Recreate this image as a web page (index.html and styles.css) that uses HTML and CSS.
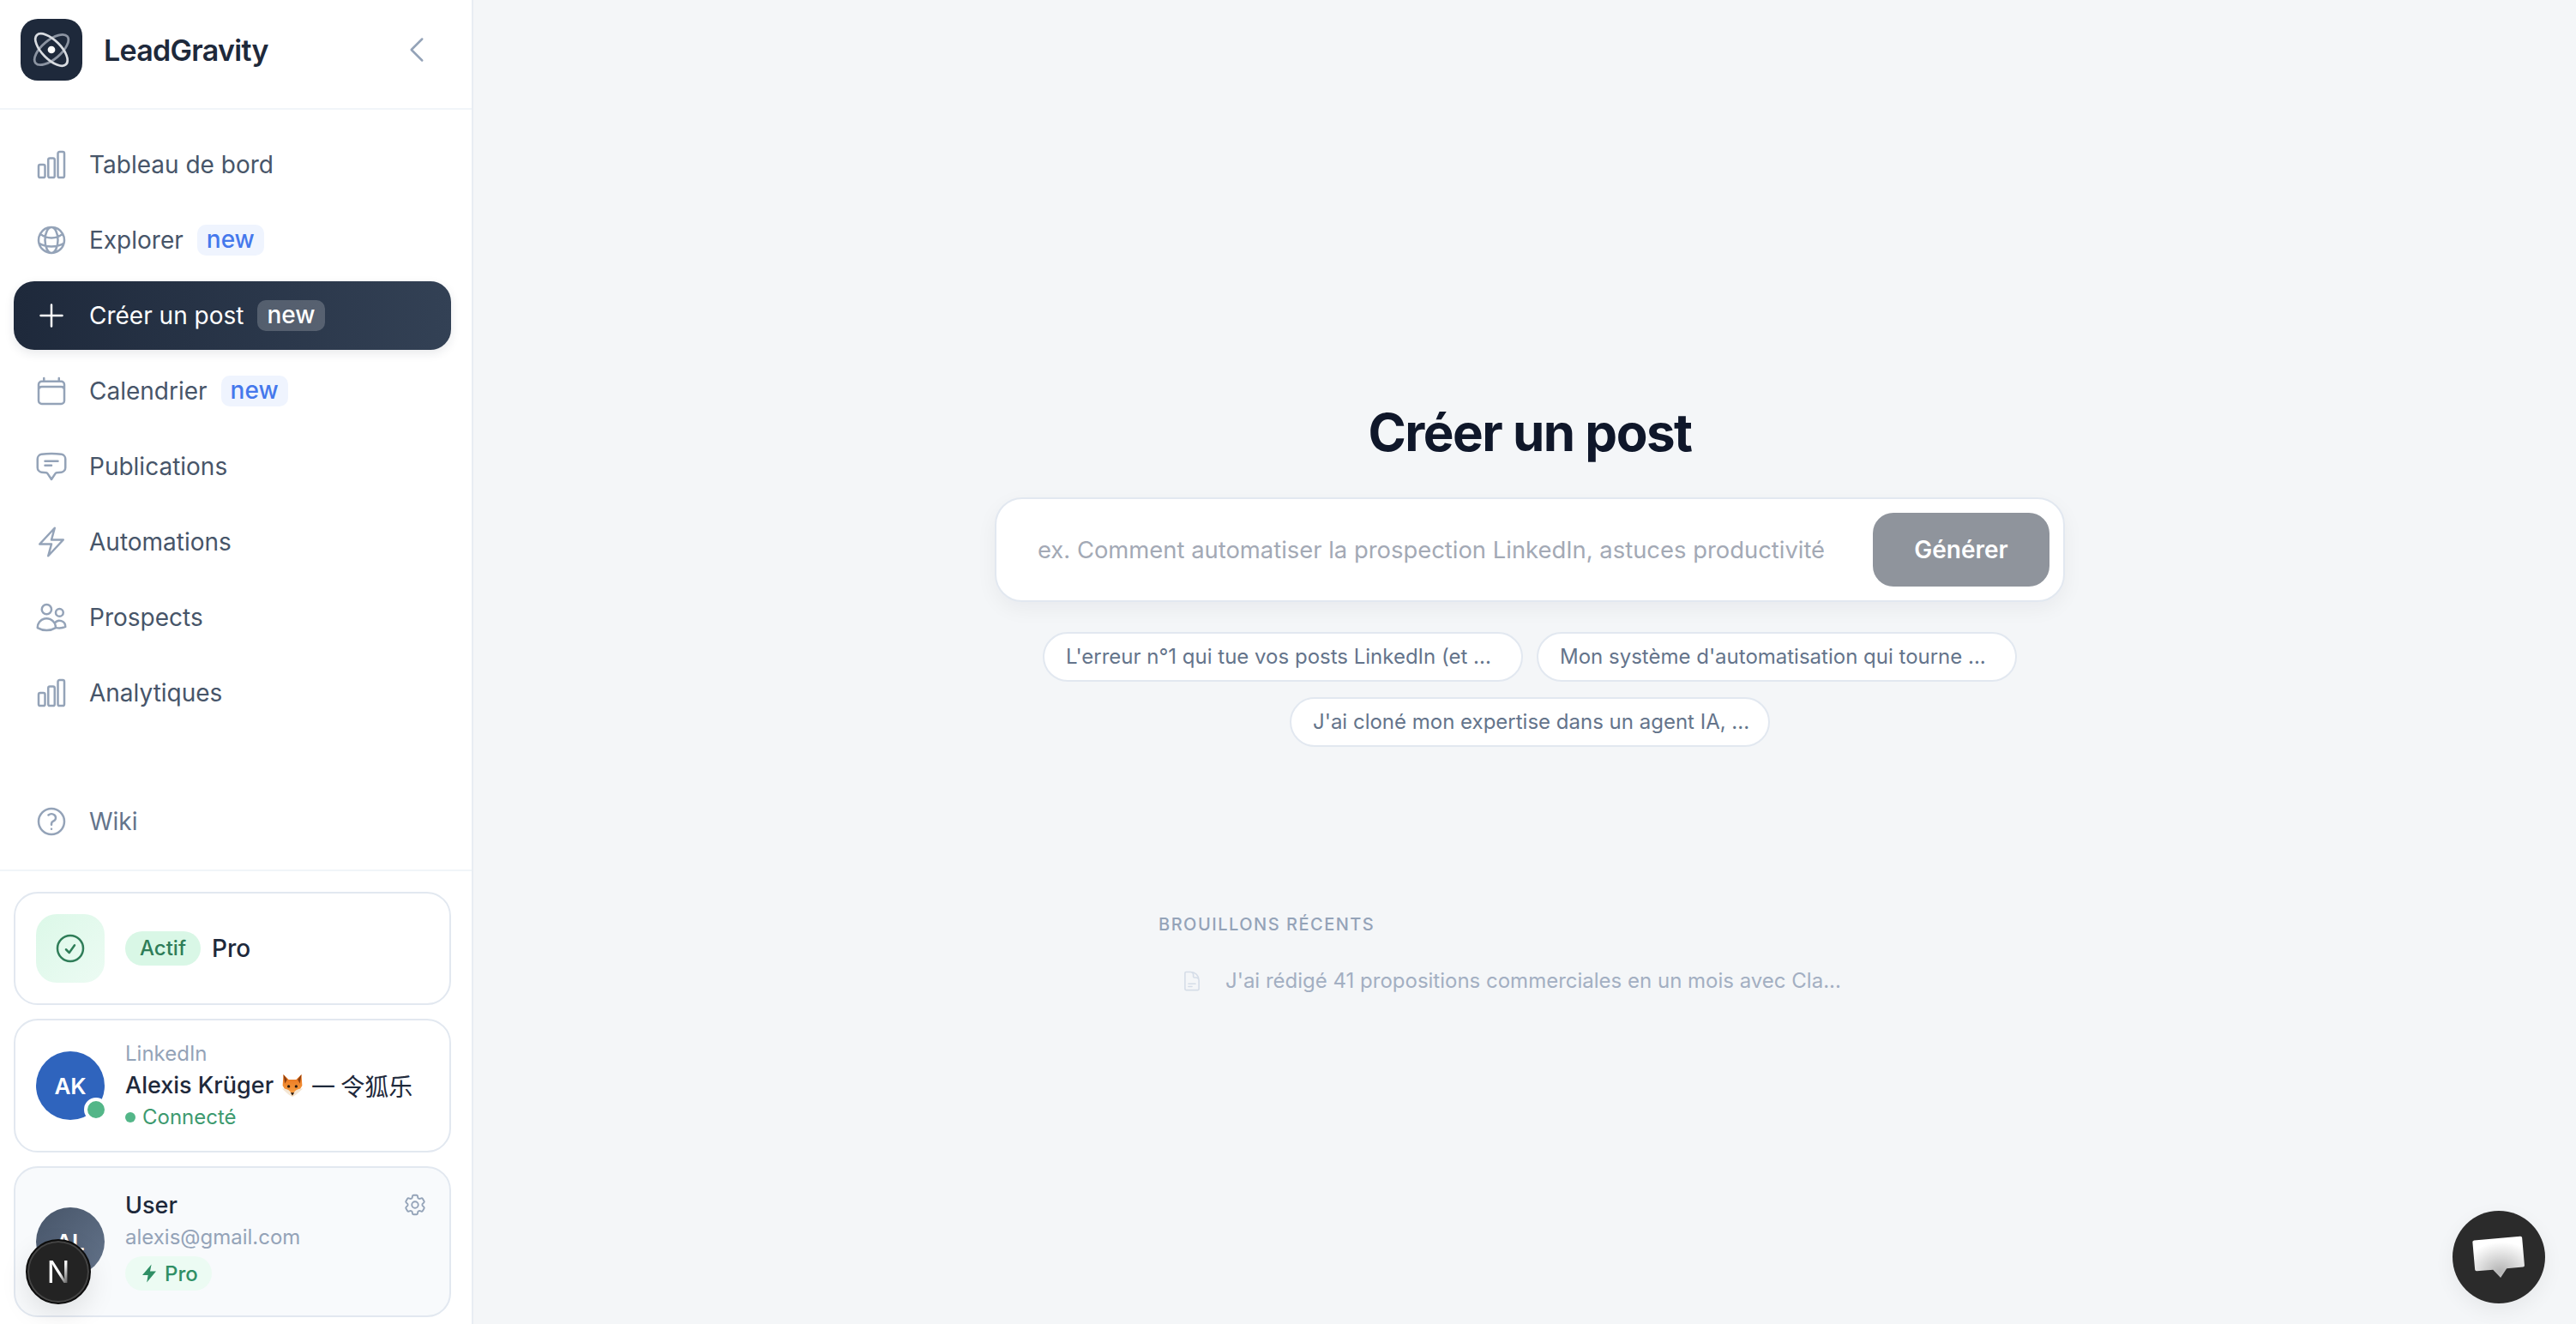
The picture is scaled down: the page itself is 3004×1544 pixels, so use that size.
FILE: index.html
```html
<!DOCTYPE html>
<html lang="fr">
<head>
    <meta charset="UTF-8">
    <meta name="viewport" content="width=device-width, initial-scale=1.0">
    <title>LeadGravity - Créer un post</title>
    <link rel="stylesheet" href="styles.css">
</head>
<body>

    <div class="app">
        <!-- Sidebar -->
        <aside class="sidebar">
            <div class="brand">
                <div class="brand-logo">
                    <svg viewBox="0 0 40 40" width="46" height="46" fill="none" stroke-width="2.4">
                        <ellipse cx="20" cy="20" rx="21" ry="9.5" transform="rotate(-40 20 20)" stroke="#8b93a1"/>
                        <ellipse cx="20" cy="20" rx="21" ry="9.5" transform="rotate(45 20 20)" stroke="#d9dce1"/>
                        <circle cx="20" cy="20" r="3.8" fill="#fff" stroke="none"/>
                    </svg>
                </div>
                <span class="brand-name">LeadGravity</span>
                <svg class="collapse" viewBox="0 0 24 24" width="40" height="40" fill="none" stroke="#94a3b8" stroke-width="1.5" stroke-linecap="round" stroke-linejoin="round"><path d="M15.75 19.5 8.25 12l7.5-7.5"/></svg>
            </div>

            <nav class="nav">
                <a class="nav-item">
                    <svg class="icon" viewBox="0 0 24 24"><path d="M3 13.125C3 12.504 3.504 12 4.125 12h2.25c.621 0 1.125.504 1.125 1.125v6.75C7.5 20.496 6.996 21 6.375 21h-2.25A1.125 1.125 0 0 1 3 19.875v-6.75ZM9.75 8.625c0-.621.504-1.125 1.125-1.125h2.25c.621 0 1.125.504 1.125 1.125v11.25c0 .621-.504 1.125-1.125 1.125h-2.25a1.125 1.125 0 0 1-1.125-1.125V8.625ZM16.5 4.125c0-.621.504-1.125 1.125-1.125h2.25C20.496 3 21 3.504 21 4.125v15.75c0 .621-.504 1.125-1.125 1.125h-2.25a1.125 1.125 0 0 1-1.125-1.125V4.125Z"/></svg>
                    <span>Tableau de bord</span>
                </a>
                <a class="nav-item">
                    <svg class="icon" viewBox="0 0 24 24"><path d="M12 21a9.004 9.004 0 0 0 8.716-6.747M12 21a9.004 9.004 0 0 1-8.716-6.747M12 21c2.485 0 4.5-4.03 4.5-9S14.485 3 12 3m0 18c-2.485 0-4.5-4.03-4.5-9S9.515 3 12 3m0 0a8.997 8.997 0 0 1 7.843 4.582M12 3a8.997 8.997 0 0 0-7.843 4.582m15.686 0A11.953 11.953 0 0 1 12 10.5c-2.998 0-5.74-1.1-7.843-2.918m15.686 0A8.959 8.959 0 0 1 21 12c0 .778-.099 1.533-.284 2.253m0 0A17.919 17.919 0 0 1 12 16.5c-3.162 0-6.133-.815-8.716-2.247m0 0A9.004 9.004 0 0 1 3 12c0-1.605.42-3.113 1.157-4.418"/></svg>
                    <span>Explorer</span>
                    <span class="badge-new">new</span>
                </a>
                <a class="nav-item active">
                    <svg class="icon" viewBox="0 0 24 24"><path d="M12 4.5v15m7.5-7.5h-15"/></svg>
                    <span>Créer un post</span>
                    <span class="badge-new">new</span>
                </a>
                <a class="nav-item">
                    <svg class="icon" viewBox="0 0 24 24"><path d="M6.75 3v2.25M17.25 3v2.25M3 18.75V7.5a2.25 2.25 0 0 1 2.25-2.25h13.5A2.25 2.25 0 0 1 21 7.5v11.25m-18 0A2.25 2.25 0 0 0 5.25 21h13.5A2.25 2.25 0 0 0 21 18.75m-18 0v-7.5A2.25 2.25 0 0 1 5.25 9h13.5A2.25 2.25 0 0 1 21 11.25v7.5"/></svg>
                    <span>Calendrier</span>
                    <span class="badge-new">new</span>
                </a>
                <a class="nav-item">
                    <svg class="icon" viewBox="0 0 24 24"><path d="M7.5 8.25h9m-9 3H12m-9.75 1.51c0 1.6 1.123 2.994 2.707 3.227 1.129.166 2.27.293 3.423.379.35.026.67.21.865.501L12 21l2.755-4.133a1.14 1.14 0 0 1 .865-.501 48.172 48.172 0 0 0 3.423-.379c1.584-.233 2.707-1.626 2.707-3.228V6.741c0-1.602-1.123-2.995-2.707-3.228A48.394 48.394 0 0 0 12 3c-2.392 0-4.744.175-7.043.513C3.373 3.746 2.25 5.14 2.25 6.741v6.018Z"/></svg>
                    <span>Publications</span>
                </a>
                <a class="nav-item">
                    <svg class="icon" viewBox="0 0 24 24"><path d="m3.75 13.5 10.5-11.25L12 10.5h8.25L9.75 21.75 12 13.5H3.75Z"/></svg>
                    <span>Automations</span>
                </a>
                <a class="nav-item">
                    <svg class="icon" viewBox="0 0 24 24"><path d="M15 19.128a9.38 9.38 0 0 0 2.625.372 9.337 9.337 0 0 0 4.121-.952 4.125 4.125 0 0 0-7.533-2.493M15 19.128v-.003c0-1.113-.285-2.16-.786-3.07M15 19.128v.106A12.318 12.318 0 0 1 8.624 21c-2.331 0-4.512-.645-6.374-1.766l-.001-.109a6.375 6.375 0 0 1 11.964-3.07M12 6.375a3.375 3.375 0 1 1-6.75 0 3.375 3.375 0 0 1 6.75 0Zm8.25 2.25a2.625 2.625 0 1 1-5.25 0 2.625 2.625 0 0 1 5.25 0Z"/></svg>
                    <span>Prospects</span>
                </a>
                <a class="nav-item">
                    <svg class="icon" viewBox="0 0 24 24"><path d="M3 13.125C3 12.504 3.504 12 4.125 12h2.25c.621 0 1.125.504 1.125 1.125v6.75C7.5 20.496 6.996 21 6.375 21h-2.25A1.125 1.125 0 0 1 3 19.875v-6.75ZM9.75 8.625c0-.621.504-1.125 1.125-1.125h2.25c.621 0 1.125.504 1.125 1.125v11.25c0 .621-.504 1.125-1.125 1.125h-2.25a1.125 1.125 0 0 1-1.125-1.125V8.625ZM16.5 4.125c0-.621.504-1.125 1.125-1.125h2.25C20.496 3 21 3.504 21 4.125v15.75c0 .621-.504 1.125-1.125 1.125h-2.25a1.125 1.125 0 0 1-1.125-1.125V4.125Z"/></svg>
                    <span>Analytiques</span>
                </a>
                <a class="nav-item wiki">
                    <svg class="icon" viewBox="0 0 24 24"><path d="M9.879 7.519c1.171-1.025 3.071-1.025 4.242 0 1.172 1.025 1.172 2.687 0 3.712-.203.179-.43.326-.67.442-.745.361-1.45.999-1.45 1.827v.75M21 12a9 9 0 1 1-18 0 9 9 0 0 1 18 0Zm-9 5.25h.008v.008H12v-.008Z"/></svg>
                    <span>Wiki</span>
                </a>
            </nav>

            <div class="side-footer">
                <!-- Plan -->
                <div class="card plan-card">
                    <div class="plan-tile">
                        <svg viewBox="0 0 24 24" width="40" height="40" fill="none" stroke="#2f7d58" stroke-width="1.5" stroke-linecap="round" stroke-linejoin="round"><path d="M9 12.75 11.25 15 15 9.75M21 12a9 9 0 1 1-18 0 9 9 0 0 1 18 0Z"/></svg>
                    </div>
                    <span class="pill-actif">Actif</span>
                    <span class="plan-name">Pro</span>
                </div>

                <!-- LinkedIn account -->
                <div class="card account-card">
                    <div class="avatar avatar-blue">AK<span class="online"></span></div>
                    <div class="card-text">
                        <div class="muted-line">LinkedIn</div>
                        <div class="name-line">Alexis Krüger
                            <svg class="fox" viewBox="0 0 32 32" width="28" height="28">
                                <defs>
                                    <linearGradient id="fur" x1="0" y1="0" x2="0" y2="1">
                                        <stop offset="0%" stop-color="#e8701a"/>
                                        <stop offset="100%" stop-color="#f9a548"/>
                                    </linearGradient>
                                </defs>
                                <path d="M4 1l7 7h10l7-7 1 15-3 5-10 9-10-9-3-5z" fill="url(#fur)"/>
                                <path d="M4 1l5 7-3 5zM28 1l-5 7 3 5z" fill="#8a3f12"/>
                                <path d="M2 20c5 0 9 1 12 5l2 5 2-5c3-4 7-5 12-5l-9 8-5 3-5-3z" fill="#f4e6d4"/>
                                <circle cx="11" cy="17" r="1.9" fill="#2b1a10"/>
                                <circle cx="21" cy="17" r="1.9" fill="#2b1a10"/>
                                <path d="M13.5 25.5h5l-2.5 3.5z" fill="#2b1a10"/>
                            </svg>
                            <span class="cjk">一 令狐乐</span>
                        </div>
                        <div class="status-line"><span class="status-dot"></span>Connecté</div>
                    </div>
                </div>

                <!-- User -->
                <div class="card user-card">
                    <div class="avatar avatar-slate">AL</div>
                    <div class="card-text">
                        <div class="name-line">User</div>
                        <div class="muted-line">alexis@gmail.com</div>
                        <span class="pill-pro">
                            <svg viewBox="0 0 24 24" width="24" height="24" fill="#2f8f65"><path d="M14.6 1.5 4 14h6.6l-1.4 8.5L20 9.6h-7z"/></svg>
                            Pro
                        </span>
                    </div>
                    <svg class="settings" viewBox="0 0 24 24" width="30" height="30" fill="none" stroke="#94a3b8" stroke-width="1.5" stroke-linecap="round" stroke-linejoin="round"><path d="M9.594 3.94c.09-.542.56-.94 1.11-.94h2.593c.55 0 1.02.398 1.11.94l.213 1.281c.063.374.313.686.645.87.074.04.147.083.22.127.325.196.72.257 1.075.124l1.217-.456a1.125 1.125 0 0 1 1.37.49l1.296 2.247a1.125 1.125 0 0 1-.26 1.431l-1.003.827c-.293.241-.438.613-.43.992a7.723 7.723 0 0 1 0 .255c-.008.378.137.75.43.991l1.004.827c.424.35.534.955.26 1.43l-1.298 2.247a1.125 1.125 0 0 1-1.369.491l-1.217-.456c-.355-.133-.75-.072-1.076.124a6.47 6.47 0 0 1-.22.128c-.331.183-.581.495-.644.869l-.213 1.281c-.09.543-.56.94-1.11.94h-2.594c-.55 0-1.019-.398-1.11-.94l-.213-1.281c-.062-.374-.312-.686-.644-.87a6.52 6.52 0 0 1-.22-.127c-.325-.196-.72-.257-1.076-.124l-1.217.456a1.125 1.125 0 0 1-1.369-.49l-1.297-2.247a1.125 1.125 0 0 1 .26-1.431l1.004-.827c.292-.24.437-.613.43-.991a6.932 6.932 0 0 1 0-.255c.007-.38-.138-.751-.43-.992l-1.004-.827a1.125 1.125 0 0 1-.26-1.43l1.297-2.247a1.125 1.125 0 0 1 1.37-.491l1.216.456c.356.133.751.072 1.076-.124.072-.044.146-.086.22-.128.332-.183.582-.495.644-.869l.214-1.28Z"/><path d="M15 12a3 3 0 1 1-6 0 3 3 0 0 1 6 0Z"/></svg>
                </div>
            </div>
        </aside>

        <!-- Main content -->
        <main class="main">
            <h1 class="title">Créer un post</h1>

            <div class="prompt">
                <input class="prompt-input" type="text" placeholder="ex. Comment automatiser la prospection LinkedIn, astuces productivité">
                <button class="prompt-btn">Générer</button>
            </div>

            <div class="chips">
                <span class="chip">L'erreur n°1 qui tue vos posts LinkedIn (et ...</span>
                <span class="chip">Mon système d'automatisation qui tourne ...</span>
                <span class="chip">J'ai cloné mon expertise dans un agent IA, ...</span>
            </div>

            <section class="drafts">
                <div class="drafts-label">Brouillons récents</div>
                <div class="draft">
                    <svg viewBox="0 0 24 24" width="26" height="26" fill="none" stroke="#d5dde8" stroke-width="1.5" stroke-linecap="round" stroke-linejoin="round"><path d="M19.5 14.25v-2.625a3.375 3.375 0 0 0-3.375-3.375h-1.5A1.125 1.125 0 0 1 13.5 7.125v-1.5a3.375 3.375 0 0 0-3.375-3.375H8.25m0 12.75h7.5m-7.5 3H12M10.5 2.25H5.625c-.621 0-1.125.504-1.125 1.125v17.25c0 .621.504 1.125 1.125 1.125h12.75c.621 0 1.125-.504 1.125-1.125V11.25a9 9 0 0 0-9-9Z"/></svg>
                    <span>J'ai rédigé 41 propositions commerciales en un mois avec Cla...</span>
                </div>
            </section>
        </main>
    </div>

    <!-- Overlays -->
    <div class="next-badge"><span class="next-mark">N</span></div>
    <div class="chat-btn">
        <svg viewBox="0 0 64 56" width="64" height="56">
            <defs>
                <radialGradient id="bubble" cx="50%" cy="85%" r="75%">
                    <stop offset="0%" stop-color="#b4b4b4"/>
                    <stop offset="100%" stop-color="#ffffff"/>
                </radialGradient>
            </defs>
            <path transform="rotate(-5 32 28)" d="M5 6h54a2 2 0 0 1 2 2v32a2 2 0 0 1-2 2H40l-8 10-8-10H5a2 2 0 0 1-2-2V8a2 2 0 0 1 2-2z" fill="url(#bubble)"/>
        </svg>
    </div>

</body>
</html>
```

FILE: styles.css
```css
/* Basic page styling */
* {
    box-sizing: border-box;
}

body {
    margin: 0;
    font-family: "Inter", "Noto Sans CJK SC", sans-serif;
    background-color: #f4f6f8;
    color: #1e293b;
}

.app {
    display: flex;
    height: 100vh;
    overflow: hidden;
}

/* Sidebar */
.sidebar {
    width: 552px;
    flex-shrink: 0;
    display: flex;
    flex-direction: column;
    background-color: #fff;
    border-right: 2px solid #e8edf3;
}

.brand {
    height: 128px;
    flex-shrink: 0;
    display: flex;
    align-items: center;
    padding: 0 24px 10px;
    border-bottom: 2px solid #f1f5f9;
}

.brand-logo {
    width: 72px;
    height: 72px;
    border-radius: 20px;
    background-color: #1e293b;
    display: flex;
    align-items: center;
    justify-content: center;
}

.brand-name {
    margin-left: 25px;
    font-size: 34px;
    font-weight: 600;
    letter-spacing: -0.7px;
}

.collapse {
    margin-left: auto;
    margin-right: 20px;
}

.nav {
    flex: 1;
    display: flex;
    flex-direction: column;
    gap: 8px;
    padding: 24px 24px 16px 16px;
}

.nav-item {
    height: 80px;
    flex-shrink: 0;
    display: flex;
    align-items: center;
    padding: 0 24px;
    border-radius: 24px;
    font-size: 28px;
    color: #475569;
}

.icon {
    width: 40px;
    height: 40px;
    margin-right: 24px;
    fill: none;
    stroke: #94a3b8;
    stroke-width: 1.5;
    stroke-linecap: round;
    stroke-linejoin: round;
    flex-shrink: 0;
}

.badge-new {
    margin-left: 16px;
    padding: 0 11px;
    height: 36px;
    line-height: 35px;
    border-radius: 10px;
    background-color: #eff4fe;
    color: #4578ec;
    font-size: 28px;
    font-weight: 500;
}

.nav-item.active {
    background: linear-gradient(90deg, #1e293b, #334155);
    color: #fff;
    box-shadow: 0 4px 12px rgba(30, 41, 59, 0.1);
}

.nav-item.active .icon {
    stroke: #fff;
}

.nav-item.active .badge-new {
    background-color: rgba(255, 255, 255, 0.2);
    color: #fff;
}

.wiki {
    margin-top: auto;
    color: #64748b;
}

.side-footer {
    display: flex;
    flex-direction: column;
    gap: 16px;
    padding: 24px 24px 8px 16px;
    border-top: 2px solid #f1f5f9;
}

.card {
    display: flex;
    align-items: center;
    padding: 0 24px;
    border: 2px solid #e2e8f0;
    border-radius: 28px;
    background-color: #fff;
}

.plan-card {
    height: 132px;
}

.plan-tile {
    width: 80px;
    height: 80px;
    border-radius: 24px;
    background: linear-gradient(135deg, #dcf8e8, #ecfbf3);
    display: flex;
    align-items: center;
    justify-content: center;
    margin-right: 24px;
}

.pill-actif {
    height: 40px;
    line-height: 40px;
    padding: 0 17px;
    border-radius: 20px;
    background-color: #d9f7e6;
    color: #2f7d58;
    font-size: 24px;
    font-weight: 500;
}

.plan-name {
    margin-left: 13px;
    font-size: 28px;
    font-weight: 500;
}

.account-card {
    height: 156px;
}

.user-card {
    height: 176px;
    position: relative;
    background-color: #f8fafc;
}

.user-card .card-text {
    margin-bottom: 4px;
}

.avatar {
    position: relative;
    width: 80px;
    height: 80px;
    border-radius: 50%;
    flex-shrink: 0;
    margin-right: 24px;
    display: flex;
    align-items: center;
    justify-content: center;
    color: #fff;
    font-size: 26px;
    font-weight: 600;
}

.avatar-blue {
    background-color: #2f64bd;
}

.avatar-slate {
    background: linear-gradient(135deg, #475569, #64748b);
}

.online {
    position: absolute;
    right: -4px;
    bottom: -2px;
    width: 28px;
    height: 28px;
    border-radius: 50%;
    background-color: #53b688;
    border: 4px solid #fff;
}

.card-text {
    min-width: 0;
    display: flex;
    flex-direction: column;
    align-items: flex-start;
}

.muted-line {
    font-size: 24px;
    line-height: 36px;
    color: #94a3b8;
}

.name-line {
    display: flex;
    align-items: center;
    gap: 8px;
    font-size: 27px;
    line-height: 38px;
    font-weight: 500;
    white-space: nowrap;
}

.cjk {
    font-family: "Noto Sans CJK SC", sans-serif;
    font-size: 28px;
    font-weight: 400;
}

.status-line {
    display: flex;
    align-items: center;
    font-size: 24px;
    line-height: 36px;
    color: #3d9a6f;
}

.status-dot {
    width: 12px;
    height: 12px;
    border-radius: 50%;
    background-color: #53b688;
    margin-right: 8px;
}

.pill-pro {
    display: inline-flex;
    align-items: center;
    gap: 6px;
    margin-top: 4px;
    height: 40px;
    padding: 0 16px;
    border-radius: 20px;
    background-color: #ecfbf3;
    color: #2f8f65;
    font-size: 24px;
    font-weight: 500;
}

.settings {
    position: absolute;
    top: 28px;
    right: 25px;
}

/* Main content */
.main {
    flex: 1;
    min-width: 0;
    display: flex;
    flex-direction: column;
    align-items: center;
    padding: 462px 0 0 12px;
}

.title {
    margin: 0;
    font-size: 60px;
    line-height: 84px;
    font-weight: 700;
    letter-spacing: -1.5px;
    color: #0f172a;
}

.prompt {
    width: 1248px;
    height: 122px;
    margin-top: 34px;
    display: flex;
    align-items: center;
    padding: 0 16px 0 46px;
    background-color: #fff;
    border: 2px solid #e2e8f0;
    border-radius: 32px;
    box-shadow: 0 8px 24px rgba(15, 23, 42, 0.05);
}

.prompt-input {
    flex: 1;
    min-width: 0;
    border: none;
    outline: none;
    background: none;
    padding-top: 1px;
    font-family: inherit;
    font-size: 27.4px;
    color: #0f172a;
}

.prompt-input::placeholder {
    color: #a3a9b5;
    opacity: 1;
}

.prompt-btn {
    width: 206px;
    height: 86px;
    border: none;
    border-radius: 24px;
    background-color: #8f949c;
    color: #fff;
    font-family: inherit;
    font-size: 28px;
    font-weight: 600;
}

.chips {
    width: 1248px;
    margin-top: 35px;
    display: flex;
    flex-wrap: wrap;
    justify-content: center;
    gap: 18px 16px;
}

.chip {
    width: 560px;
    height: 58px;
    line-height: 54px;
    padding-left: 25px;
    background-color: #fff;
    border: 2px solid #e2e8f0;
    border-radius: 29px;
    font-size: 24px;
    color: #64748b;
    white-space: nowrap;
}

.drafts {
    width: 866px;
    margin-top: 191px;
}

.drafts-label {
    font-size: 20px;
    line-height: 32px;
    letter-spacing: 1.5px;
    font-weight: 500;
    text-transform: uppercase;
    color: #94a3b8;
}

.draft {
    display: flex;
    align-items: center;
    gap: 26px;
    margin-top: 30px;
    padding-left: 26px;
    font-size: 24px;
    line-height: 40px;
    color: #a3afc2;
}

/* Overlays */
.next-badge {
    position: absolute;
    left: 30px;
    top: 1445px;
    width: 76px;
    height: 76px;
    border-radius: 50%;
    background-color: #232323;
    border: 2px solid #0d0d0d;
    box-shadow: inset 0 0 0 2px #444, 0 12px 32px rgba(0, 0, 0, 0.1);
    display: flex;
    align-items: center;
    justify-content: center;
}

.next-mark {
    font-size: 36px;
    font-weight: 400;
    background: linear-gradient(120deg, #fff 55%, #555 85%);
    -webkit-background-clip: text;
    background-clip: text;
    color: transparent;
}

.chat-btn {
    position: absolute;
    left: 2860px;
    top: 1412px;
    width: 108px;
    height: 108px;
    border-radius: 50%;
    background-color: #2b2b2b;
    box-shadow: 0 8px 24px rgba(0, 0, 0, 0.06);
    display: flex;
    align-items: center;
    justify-content: center;
}
```
